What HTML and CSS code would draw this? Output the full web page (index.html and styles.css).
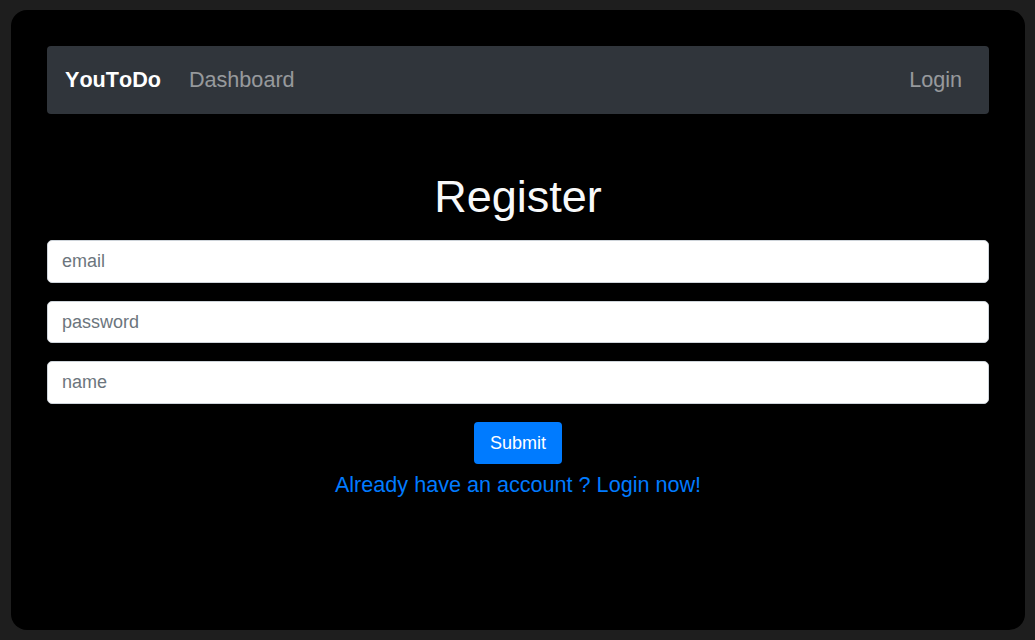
FILE: index.html
```html
<!DOCTYPE html>
<html lang="en">
<head>
<meta charset="utf-8">
<title>YouToDo - Register</title>
<link rel="stylesheet" href="styles.css">
</head>
<body>
<div class="frame">
  <nav class="navbar">
    <a class="brand" href="#">YouToDo</a>
    <a class="nav-link" href="#">Dashboard</a>
    <span class="spacer"></span>
    <a class="nav-link" href="#">Login</a>
  </nav>
  <main class="register">
    <h1 class="title">Register</h1>
    <form class="form">
      <input class="field" type="email" placeholder="email">
      <input class="field" type="password" placeholder="password">
      <input class="field" type="text" placeholder="name">
      <button class="submit" type="button">Submit</button>
      <a class="switch" href="#">Already have an account ? Login now!</a>
    </form>
  </main>
</div>
</body>
</html>
```
FILE: styles.css
```css
html, body {
  margin: 0;
  padding: 0;
  background: #1e1e1e;
  font-family: "Liberation Sans", Arial, sans-serif;
  font-kerning: none;
}
.frame {
  box-sizing: border-box;
  margin: 10px 10px 10px 11px;
  height: 620px;
  background: #000;
  border-radius: 16px;
  padding: 36px 36px 0 36px;
}
.navbar {
  display: flex;
  align-items: center;
  height: 67.5px;
  background: #30353b;
  border-radius: 4px;
  padding: 0 27px 0 18px;
}
.brand {
  color: #fff;
  font-weight: bold;
  font-size: 21.6px;
  text-decoration: none;
  margin-right: 28px;
}
.nav-link {
  color: rgba(255, 255, 255, 0.5);
  font-size: 21.6px;
  text-decoration: none;
}
.spacer { flex: 1; }
.register {
  display: flex;
  flex-direction: column;
}
.title {
  margin: 56.5px 0 16px;
  font-size: 45px;
  font-weight: normal;
  line-height: 54px;
  color: #f8f9fa;
  text-align: center;
}
.form {
  display: flex;
  flex-direction: column;
  align-items: center;
}
.field {
  box-sizing: border-box;
  width: 100%;
  height: 42.5px;
  margin: 0 0 18px;
  padding: 1px 14px 0;
  border: 1px solid #ced4da;
  border-radius: 5px;
  background: #fff;
  font-family: "Liberation Sans", Arial, sans-serif;
  font-size: 18px;
  color: #495057;
}
.field::placeholder { color: #6c757d; }
.submit {
  margin-top: 0.5px;
  height: 42px;
  padding: 0 15.5px;
  border: none;
  border-radius: 4px;
  background: #007bff;
  color: #fff;
  font-family: "Liberation Sans", Arial, sans-serif;
  font-size: 18px;
}
.switch {
  margin-top: 5px;
  font-size: 21.6px;
  line-height: 1.5;
  color: #007bff;
  text-decoration: none;
}
```
